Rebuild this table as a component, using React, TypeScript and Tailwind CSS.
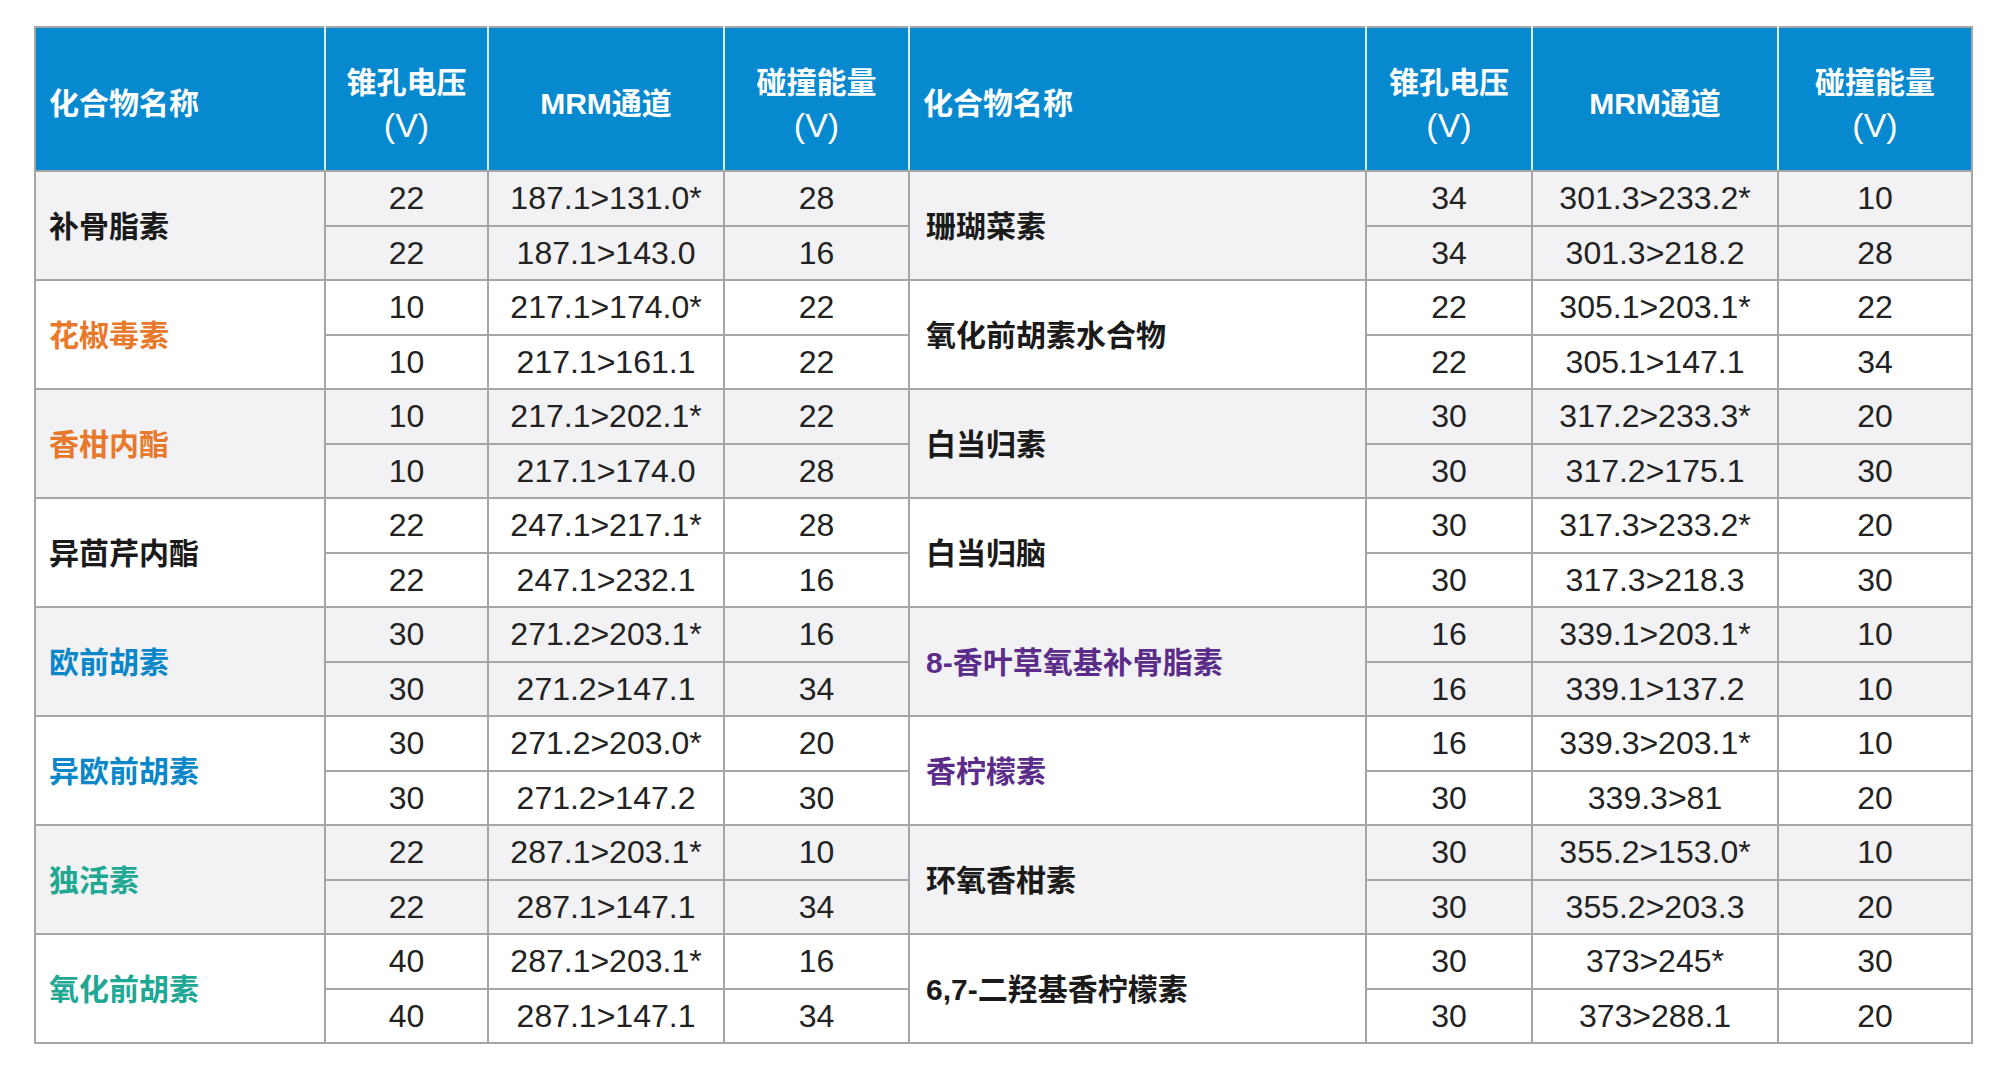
import React from 'react';

type Sub = [string, string, string];
type Group = { name: string; color: string; rows: [Sub, Sub] };

const leftGroups: Group[] = [
  { name: '补骨脂素', color: 'text-[#1a1a1a]', rows: [['22', '187.1>131.0*', '28'], ['22', '187.1>143.0', '16']] },
  { name: '花椒毒素', color: 'text-[#e8782a]', rows: [['10', '217.1>174.0*', '22'], ['10', '217.1>161.1', '22']] },
  { name: '香柑内酯', color: 'text-[#e8782a]', rows: [['10', '217.1>202.1*', '22'], ['10', '217.1>174.0', '28']] },
  { name: '异茴芹内酯', color: 'text-[#1a1a1a]', rows: [['22', '247.1>217.1*', '28'], ['22', '247.1>232.1', '16']] },
  { name: '欧前胡素', color: 'text-[#0a87c9]', rows: [['30', '271.2>203.1*', '16'], ['30', '271.2>147.1', '34']] },
  { name: '异欧前胡素', color: 'text-[#0a87c9]', rows: [['30', '271.2>203.0*', '20'], ['30', '271.2>147.2', '30']] },
  { name: '独活素', color: 'text-[#1fa893]', rows: [['22', '287.1>203.1*', '10'], ['22', '287.1>147.1', '34']] },
  { name: '氧化前胡素', color: 'text-[#1fa893]', rows: [['40', '287.1>203.1*', '16'], ['40', '287.1>147.1', '34']] },
];

const rightGroups: Group[] = [
  { name: '珊瑚菜素', color: 'text-[#1a1a1a]', rows: [['34', '301.3>233.2*', '10'], ['34', '301.3>218.2', '28']] },
  { name: '氧化前胡素水合物', color: 'text-[#1a1a1a]', rows: [['22', '305.1>203.1*', '22'], ['22', '305.1>147.1', '34']] },
  { name: '白当归素', color: 'text-[#1a1a1a]', rows: [['30', '317.2>233.3*', '20'], ['30', '317.2>175.1', '30']] },
  { name: '白当归脑', color: 'text-[#1a1a1a]', rows: [['30', '317.3>233.2*', '20'], ['30', '317.3>218.3', '30']] },
  { name: '8-香叶草氧基补骨脂素', color: 'text-[#5b2c8a]', rows: [['16', '339.1>203.1*', '10'], ['16', '339.1>137.2', '10']] },
  { name: '香柠檬素', color: 'text-[#5b2c8a]', rows: [['16', '339.3>203.1*', '10'], ['30', '339.3>81', '20']] },
  { name: '环氧香柑素', color: 'text-[#1a1a1a]', rows: [['30', '355.2>153.0*', '10'], ['30', '355.2>203.3', '20']] },
  { name: '6,7-二羟基香柠檬素', color: 'text-[#1a1a1a]', rows: [['30', '373>245*', '30'], ['30', '373>288.1', '20']] },
];

const FONT = 'font-["Liberation_Sans","Noto_Sans_CJK_SC",sans-serif]';

const HeadTwoLine = ({ top, last }: { top: string; last?: boolean }) => (
  <th
    className={`border-2 border-[#a6a6a6] border-l-[#d3ecf8] ${last ? '' : 'border-r-[#d3ecf8]'} pt-[10px] text-center align-middle`}
  >
    <div className="text-[30px] font-bold leading-[42px]">{top}</div>
    <div className="text-[34px] font-normal leading-[42px]">(V)</div>
  </th>
);

const HeadName = ({ first }: { first?: boolean }) => (
  <th
    className={`border-2 border-[#a6a6a6] ${first ? '' : 'border-l-[#d3ecf8]'} border-r-[#d3ecf8] pl-[13px] pt-[8px] text-left align-middle text-[30px] font-bold`}
  >
    化合物名称
  </th>
);

const HeadMrm = () => (
  <th className="border-2 border-[#a6a6a6] border-x-[#d3ecf8] pt-[8px] text-center align-middle text-[30px] font-bold">
    MRM通道
  </th>
);

export default function App() {
  const cell = 'border-2 border-[#a6a6a6] text-center align-middle text-[32px] text-[#222]';

  return (
    <div className={`min-h-screen bg-white pl-[34px] pt-[26px] ${FONT}`}>
      <table className="w-[1937px] table-fixed border-collapse border-2 border-[#a6a6a6]">
        <colgroup>
          <col className="w-[290px]" />
          <col className="w-[163px]" />
          <col className="w-[236px]" />
          <col className="w-[185px]" />
          <col className="w-[457px]" />
          <col className="w-[166px]" />
          <col className="w-[246px]" />
          <col className="w-[194px]" />
        </colgroup>
        <thead>
          <tr className="h-[144px] bg-[#0789d0] text-white">
            <HeadName first />
            <HeadTwoLine top="锥孔电压" />
            <HeadMrm />
            <HeadTwoLine top="碰撞能量" />
            <HeadName />
            <HeadTwoLine top="锥孔电压" />
            <HeadMrm />
            <HeadTwoLine top="碰撞能量" last />
          </tr>
        </thead>
        <tbody>
          {leftGroups.map((lg, gi) => {
            const rg = rightGroups[gi];
            const bg = gi % 2 === 0 ? 'bg-[#f2f2f4]' : 'bg-white';
            return [0, 1].map((ri) => (
              <tr key={`${gi}-${ri}`} className={`h-[54.5px] ${bg}`}>
                {ri === 0 && (
                  <td rowSpan={2} className={`border-2 border-[#a6a6a6] pl-[13px] pt-[2px] align-middle text-[30px] font-bold ${lg.color}`}>
                    {lg.name}
                  </td>
                )}
                <td className={cell}>{lg.rows[ri][0]}</td>
                <td className={cell}>{lg.rows[ri][1]}</td>
                <td className={cell}>{lg.rows[ri][2]}</td>
                {ri === 0 && (
                  <td rowSpan={2} className={`border-2 border-[#a6a6a6] pl-[16px] pt-[2px] align-middle text-[30px] font-bold ${rg.color}`}>
                    {rg.name}
                  </td>
                )}
                <td className={cell}>{rg.rows[ri][0]}</td>
                <td className={cell}>{rg.rows[ri][1]}</td>
                <td className={cell}>{rg.rows[ri][2]}</td>
              </tr>
            ));
          })}
        </tbody>
      </table>
    </div>
  );
}
